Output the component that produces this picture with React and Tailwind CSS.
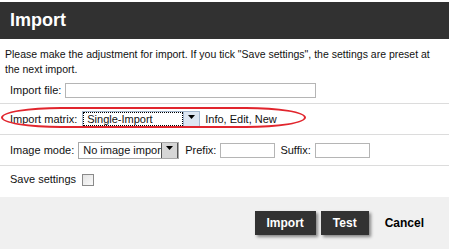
import React from "react";

const Arrow = () => (
  <svg width="7" height="4" viewBox="0 0 7 4" className="mt-[3px]">
    <path d="M0 0h7L3.5 4z" fill="#000" />
  </svg>
);

const TextBox = ({ className }) => (
  <input
    type="text"
    readOnly
    className={`h-[15px] border border-[#b5b5b5] bg-white outline-none ${className}`}
  />
);

const App = () => {
  return (
    <div className="w-[452px] h-[251px] bg-white pt-[2px] font-['Liberation_Sans',Arial,sans-serif] text-[11px] text-[#111] overflow-hidden">
      <div className="w-[449px]">
        <div className="h-[37px] bg-[#313131] flex items-center pl-[10px] text-white text-[18px] font-bold">
          Import
        </div>

        <div className="pt-[8px] px-[5px] text-[10.5px] leading-[15px] whitespace-nowrap">
          Please make the adjustment for import. If you tick "Save settings", the settings are preset at
          <br />
          the next import.
        </div>

        <div className="h-[27px] flex items-center pl-[10px] border-b border-[#dcdcdc]">
          <span>Import file:</span>
          <TextBox className="ml-[4px] w-[251px]" />
        </div>

        <div className="relative h-[31px] flex items-center pl-[10px] border-b border-[#dcdcdc]">
          <span>Import matrix:</span>
          <div className="ml-[5px] flex h-[16px] w-[118px] border border-[#a5b8cf] bg-white">
            <div className="flex-1 border border-dotted border-black pl-[3px] leading-[12px]">
              Single-Import
            </div>
            <div className="w-[16px] flex justify-center bg-[#dde6f2] border-l border-[#9fb4d0]">
              <Arrow />
            </div>
          </div>
          <span className="ml-[5px]">Info, Edit, New</span>
          <div className="absolute left-[1px] top-[3px] w-[305px] h-[21px] rounded-[60px/10.5px] border-2 border-[#e1252d]" />
        </div>

        <div className="h-[31px] flex items-center pl-[10px] border-b border-[#dcdcdc]">
          <span>Image mode:</span>
          <div className="ml-[4px] relative flex h-[17px] w-[101px] border border-[#a8a8a8] bg-white overflow-hidden">
            <div className="flex-1 pl-[4px] leading-[15px] whitespace-nowrap">No image import</div>
            <div className="absolute right-0 top-[-1px] h-[17px] w-[17px] flex justify-center bg-[#d6d6d6] border border-[#555]">
              <Arrow />
            </div>
          </div>
          <span className="ml-[6px]">Prefix:</span>
          <TextBox className="ml-[4px] w-[55px]" />
          <span className="ml-[5px]">Suffix:</span>
          <TextBox className="ml-[4px] w-[55px]" />
        </div>

        <div className="h-[31px] flex items-center pl-[10px] pb-[4px]">
          <span>Save settings</span>
          <div className="ml-[6px] w-[12px] h-[12px] border border-[#8a8a8a] bg-gradient-to-br from-[#e4e4e4] to-[#fafafa]" />
        </div>

        <div className="h-[52px] bg-[#f0f0f0] flex items-start justify-end pt-[14px] pr-[14px] gap-[5px] text-[12px] font-bold">
          <button className="h-[24px] px-[12px] bg-[#323232] text-white shadow-[2px_2px_3px_rgba(0,0,0,0.45)]">
            Import
          </button>
          <button className="h-[24px] px-[12px] bg-[#323232] text-white shadow-[2px_2px_3px_rgba(0,0,0,0.45)]">
            Test
          </button>
          <button className="h-[24px] px-[11px] text-black">Cancel</button>
        </div>
      </div>
    </div>
  );
};

export default App;
